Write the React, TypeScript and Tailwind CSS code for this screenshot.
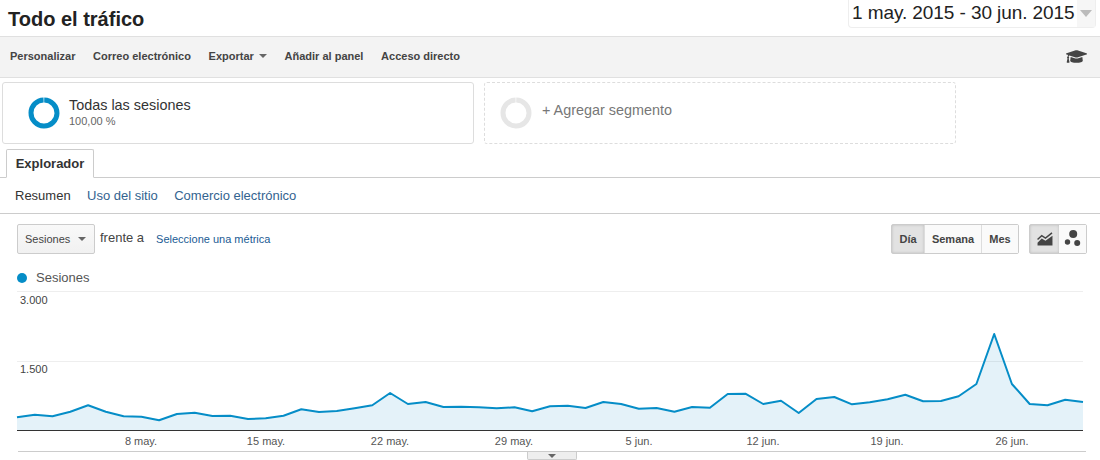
import { FaGraduationCap } from 'react-icons/fa'

const POINTS = [
  417.3, 414.7, 416.3, 411.7, 405.3, 411.7, 416.3, 416.7, 420.3, 414, 412.7,
  416, 415.7, 419, 418.3, 415.7, 409.3, 412, 411, 408.3, 405.3, 393, 404, 402,
  407, 406.7, 407.3, 408.3, 407.3, 411.3, 406.3, 405.7, 408, 402, 404, 408.7,
  408, 411.7, 407, 407.7, 394, 393.7, 404, 400.7, 413, 399, 397, 404.3, 402.3,
  399.3, 394.7, 401.3, 401, 396.3, 384, 334, 384, 404, 405.3, 399.7, 402,
]

const X_LABELS = [
  { x: 141, text: '8 may.' },
  { x: 266, text: '15 may.' },
  { x: 390, text: '22 may.' },
  { x: 514, text: '29 may.' },
  { x: 639, text: '5 jun.' },
  { x: 763, text: '12 jun.' },
  { x: 887, text: '19 jun.' },
  { x: 1012, text: '26 jun.' },
]

const TOOLBAR = ['Personalizar', 'Correo electrónico', 'Exportar', 'Añadir al panel', 'Acceso directo']

function xAt(i: number) {
  return 17 + (i * 1066) / 60
}

function Caret({ className }: { className: string }) {
  return <span className={`inline-block h-0 w-0 border-x-[4px] border-t-[4px] border-x-transparent ${className}`} />
}

function Donut({ color }: { color: string }) {
  return (
    <svg width="32" height="32" viewBox="0 0 32 32" className="-mt-px shrink-0">
      <circle cx="16" cy="16" r="13" fill="none" stroke={color} strokeWidth="5" strokeDasharray="80.5 1.2" transform="rotate(-89 16 16)" />
    </svg>
  )
}

function Chart() {
  const line = POINTS.map((y, i) => `${xAt(i).toFixed(1)},${y}`).join(' ')
  const area = `17,430 ${line} 1083,430`

  return (
    <svg width="1100" height="166" viewBox="0 285 1100 166" className="block font-['Liberation_Sans',Arial,sans-serif]">
      <line x1="17" x2="1083" y1="291.5" y2="291.5" stroke="#eeeeee" />
      <line x1="17" x2="1083" y1="361.5" y2="361.5" stroke="#eeeeee" />
      <polygon points={area} fill="#058dc7" fillOpacity="0.11" />
      <polyline points={line} fill="none" stroke="#058dc7" strokeWidth="2" strokeLinejoin="round" />
      <line x1="17" x2="1083" y1="430.5" y2="430.5" stroke="#333333" />
      <text x="20" y="304" fontSize="11" fill="#444444">3.000</text>
      <text x="20" y="373" fontSize="11" fill="#444444">1.500</text>
      {X_LABELS.map((label) => (
        <text key={label.text} x={label.x} y="445" fontSize="11" fill="#555555" textAnchor="middle">
          {label.text}
        </text>
      ))}
    </svg>
  )
}

export default function App() {
  return (
    <div className="h-[460px] w-[1100px] overflow-hidden bg-white font-['Liberation_Sans',Arial,sans-serif] text-[#333]">
      <header className="flex h-[37px] items-start justify-between border-b border-[#e0e0e0] pl-2 pr-1">
        <h1 className="mt-[7px] text-xl leading-6 font-bold text-[#222]">Todo el tráfico</h1>
        <div className="flex h-[28px] w-[248px] items-stretch justify-between rounded-b-[4px] border border-t-0 border-[#eeeeee] pl-[3px]">
          <span className="text-[19px] leading-[26px] tracking-[-0.08px] whitespace-nowrap text-[#222]">1 may. 2015 - 30 jun. 2015</span>
          <span className="flex w-[18px] items-center justify-center bg-[#f6f6f6]">
            <Caret className="border-x-[6px] border-t-[7px] border-t-[#bbbbbb]" />
          </span>
        </div>
      </header>

      <nav className="flex h-[41px] items-center justify-between border-b border-[#e0e0e0] bg-[#f3f3f3] pr-[13px] pb-[2px] pl-[10px] text-[11px] font-bold text-[#444]">
        <div className="flex items-center gap-[17.7px]">
          {TOOLBAR.map((item) => (
            <span key={item} className="flex items-center gap-[5px]">
              {item}
              {item === 'Exportar' && <Caret className="border-t-[#666666]" />}
            </span>
          ))}
        </div>
        <FaGraduationCap className="size-[21px] text-[#444]" />
      </nav>

      <section className="mt-1 flex gap-[10px] pl-[2px]">
        <div className="flex h-[62px] w-[472px] items-center gap-[9px] rounded-[3px] border border-[#dddddd] pl-[25px]">
          <Donut color="#058dc7" />
          <div className="-mt-[3px]">
            <p className="text-[14.4px] leading-4 text-[#333]">Todas las sesiones</p>
            <p className="mt-[2px] text-[11px] leading-3 text-[#666]">100,00 %</p>
          </div>
        </div>
        <div className="flex h-[62px] w-[472px] items-center gap-[10px] rounded-[3px] border border-dashed border-[#dddddd] pl-[15px]">
          <Donut color="#e6e6e6" />
          <p className="-mt-[4px] text-[14.4px] text-[#777]">+ Agregar segmento</p>
        </div>
      </section>

      <div className="mt-[5px] flex h-[29px] items-end border-b border-[#cccccc] pl-[6px]">
        <div className="-mb-px flex h-[29px] w-[88px] items-center justify-center rounded-t-[2px] border border-b-white border-[#cccccc] bg-white text-[13px] font-bold text-[#333]">
          Explorador
        </div>
      </div>

      <div className="flex h-[36px] items-center gap-[16.4px] border-b border-[#cccccc] pl-[15px] text-[13px] text-[#33638f]">
        <span className="text-[#333]">Resumen</span>
        <span>Uso del sitio</span>
        <span>Comercio electrónico</span>
      </div>

      <div className="mt-[10px] flex h-[30px] items-center justify-between pr-[13px] pl-[17px]">
        <div className="flex items-center">
          <div className="flex h-[30px] w-[78px] items-center justify-between rounded-[2px] border border-[#cccccc] bg-gradient-to-b from-[#f9f9f9] to-[#f1f1f1] pr-[8px] pl-[7px] text-[11px] text-[#444]">
            Sesiones
            <Caret className="border-t-[#666666]" />
          </div>
          <span className="-mt-[3px] ml-[5px] text-[13px] text-[#444]">frente a</span>
          <span className="ml-3 text-[11px] text-[#1a5b94]">Seleccione una métrica</span>
        </div>

        <div className="flex items-center gap-[10px]">
          <div className="flex h-[30px] rounded-[2px] border border-[#cccccc] text-[11px] font-bold text-[#444]">
            <span className="flex w-[32px] items-center justify-center bg-[#e2e2e2] shadow-[inset_0_0_3px_#bbbbbb]">Día</span>
            <span className="flex w-[58px] items-center justify-center border-x border-[#dddddd] bg-[#fafafa]">Semana</span>
            <span className="flex w-[36px] items-center justify-center bg-[#fafafa]">Mes</span>
          </div>
          <div className="flex h-[30px] rounded-[2px] border border-[#cccccc]">
            <span className="flex w-[29px] items-center justify-center bg-[#e2e2e2] shadow-[inset_0_0_3px_#bbbbbb]">
              <svg width="16" height="14" viewBox="0 0 17 15">
                <path d="M0.5 8 L5 4 L9 6.5 L16 1" fill="none" stroke="#444" strokeWidth="1.6" />
                <path d="M0.5 14.5 V11.5 L5 7 L9 9.5 L16.5 4 V14.5 Z" fill="#444" />
              </svg>
            </span>
            <span className="flex w-[27px] items-center justify-center bg-[#fafafa]">
              <svg width="18" height="18" viewBox="0 0 18 18">
                <circle cx="9.2" cy="4" r="4" fill="#444" />
                <circle cx="3.5" cy="12" r="2.7" fill="#444" />
                <circle cx="13.2" cy="13" r="3" fill="#444" />
              </svg>
            </span>
          </div>
        </div>
      </div>

      <div className="mt-[17px] flex h-[14px] items-center gap-[9px] pl-[17px] text-[13px] text-[#555]">
        <span className="size-[10px] rounded-full bg-[#058dc7]" />
        Sesiones
      </div>

      <Chart />

      <div className="ml-[18px] h-px w-[1068px] bg-[#cccccc]" />
      <div className="ml-[527px] flex h-[8px] w-[50px] items-center justify-center rounded-b-[2px] border border-t-0 border-[#cccccc] bg-[#eeeeee]">
        <Caret className="border-t-[#666666]" />
      </div>
    </div>
  )
}
